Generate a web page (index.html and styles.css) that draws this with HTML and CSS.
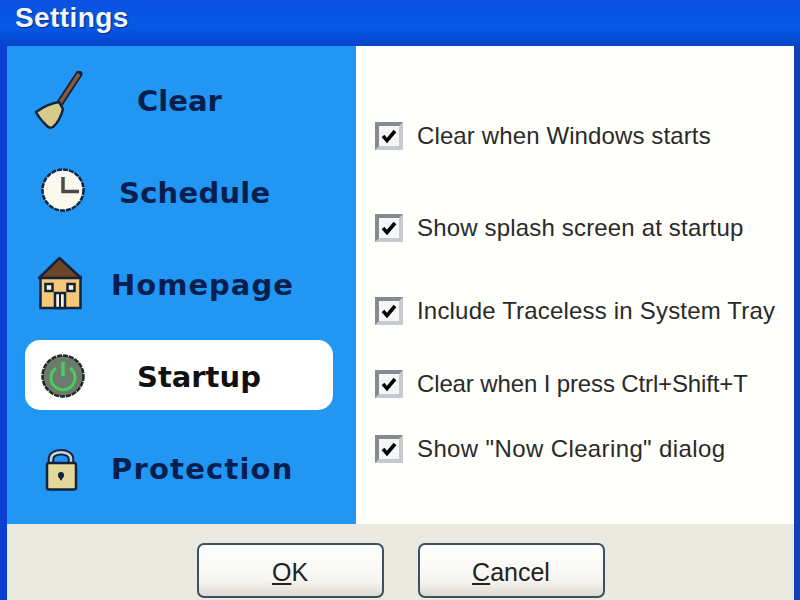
FILE: index.html
```html
<!DOCTYPE html>
<html lang="en">
<head>
    <meta charset="UTF-8">
    <meta name="viewport" content="width=device-width, initial-scale=1.0">
    <title>Settings</title>
    <link rel="stylesheet" href="styles.css">
</head>
<body>
    <div class="window">
        <div class="titlebar">Settings</div>
        <div class="main">
            <div class="sidebar">
                <div class="nav-item nav-clear">
                    <svg class="nav-icon" viewBox="0 0 60 60">
                        <path d="M46 3L27 32" stroke="#10233f" stroke-width="7" stroke-linecap="round"/>
                        <path d="M46 3L27 32" stroke="#8a5a34" stroke-width="3.5"/>
                        <path d="M3 41Q14 33 26 31L30 38Q27 50 20 56Q16 58 13 54Q6 47 3 41Z" fill="#d6cb8c" stroke="#10233f" stroke-width="2.5" stroke-linejoin="round"/>
                    </svg>
                    <span class="nav-label">Clear</span>
                </div>
                <div class="nav-item nav-schedule">
                    <svg class="nav-icon" viewBox="0 0 60 60">
                        <circle cx="30" cy="27" r="20.5" fill="#fbf8ee" stroke="#10233f" stroke-width="2.5" stroke-dasharray="5 1"/>
                        <path d="M30 14V28.5H46" fill="none" stroke="#4a4a48" stroke-width="3.5"/>
                    </svg>
                    <span class="nav-label">Schedule</span>
                </div>
                <div class="nav-item nav-homepage">
                    <svg class="nav-icon" viewBox="0 0 60 60">
                        <rect x="7.5" y="22" width="40" height="31" fill="#f8c87a" stroke="#10233f" stroke-width="2.5"/>
                        <path d="M26.5 3L6 23H48Z" fill="#6e4526" stroke="#10233f" stroke-width="2.5" stroke-linejoin="round"/>
                        <rect x="12.5" y="29" width="7" height="7" fill="#fff3d6" stroke="#10233f" stroke-width="2.5"/>
                        <rect x="34.5" y="29" width="7" height="7" fill="#fff3d6" stroke="#10233f" stroke-width="2.5"/>
                        <rect x="22" y="38" width="10" height="15" fill="#fff3d6" stroke="#10233f" stroke-width="2.5"/>
                        <path d="M27 38V53" stroke="#10233f" stroke-width="2"/>
                    </svg>
                    <span class="nav-label">Homepage</span>
                </div>
                <div class="nav-item nav-startup active">
                    <svg class="nav-icon" viewBox="0 0 60 60">
                        <circle cx="30" cy="29" r="20.5" fill="#6c7a6c" stroke="#1d2a22" stroke-width="2.5" stroke-dasharray="5 1"/>
                        <path d="M23 21A12 12 0 1 0 37 21" fill="none" stroke="#4ccb5e" stroke-width="3"/>
                        <path d="M30 15V29" stroke="#4ccb5e" stroke-width="3.5"/>
                    </svg>
                    <span class="nav-label">Startup</span>
                </div>
                <div class="nav-item nav-protection">
                    <svg class="nav-icon" viewBox="0 0 60 60">
                        <path d="M18 25V20C18 11 38 11 38 20V25" fill="none" stroke="#10233f" stroke-width="6.5"/>
                        <path d="M18 25V20C18 11 38 11 38 20V25" fill="none" stroke="#c9d3d6" stroke-width="2.5"/>
                        <rect x="14" y="24" width="29" height="26.5" rx="2" fill="#e6d79a" stroke="#10233f" stroke-width="2.5"/>
                        <circle cx="28" cy="36" r="3" fill="#10233f"/>
                        <path d="M25 37H31L28 42Z" fill="#10233f"/>
                    </svg>
                    <span class="nav-label">Protection</span>
                </div>
            </div>
            <div class="options">
                <div class="option"><span class="check"><svg viewBox="0 0 16 16"><path d="M2 8L6 12.5L14 3" fill="none" stroke="#000" stroke-width="3.5"/></svg></span>Clear when Windows starts</div>
                <div class="option"><span class="check"><svg viewBox="0 0 16 16"><path d="M2 8L6 12.5L14 3" fill="none" stroke="#000" stroke-width="3.5"/></svg></span>Show splash screen at startup</div>
                <div class="option"><span class="check"><svg viewBox="0 0 16 16"><path d="M2 8L6 12.5L14 3" fill="none" stroke="#000" stroke-width="3.5"/></svg></span>Include Traceless in System Tray</div>
                <div class="option"><span class="check"><svg viewBox="0 0 16 16"><path d="M2 8L6 12.5L14 3" fill="none" stroke="#000" stroke-width="3.5"/></svg></span>Clear when I press Ctrl+Shift+T</div>
                <div class="option"><span class="check"><svg viewBox="0 0 16 16"><path d="M2 8L6 12.5L14 3" fill="none" stroke="#000" stroke-width="3.5"/></svg></span>Show "Now Clearing" dialog</div>
            </div>
        </div>
        <div class="footer">
            <button class="btn"><u>O</u>K</button>
            <button class="btn"><u>C</u>ancel</button>
        </div>
    </div>
</body>
</html>
```

FILE: styles.css
```css
html, body {
    margin: 0;
    height: 100%;
    overflow: hidden;
}
.window {
    display: flex;
    flex-direction: column;
    height: 600px;
    box-sizing: border-box;
    border-left: 7px solid #0a3fd2;
    border-right: 6px solid #1241b6;
    background: #ebeae1;
}
.titlebar {
    height: 46px;
    margin-left: -7px;
    margin-right: -6px;
    padding-left: 15px;
    box-sizing: border-box;
    background: linear-gradient(#0a52e0, #0658e6 60%, #0443c8);
    color: #f4f6ff;
    font-family: "Liberation Sans", sans-serif;
    font-weight: bold;
    font-size: 28px;
    letter-spacing: 0.4px;
    line-height: 36px;
    text-shadow: 1px 1px 1px #0a2a80;
}
.main {
    display: flex;
    height: 478px;
}
.sidebar {
    width: 349px;
    box-sizing: border-box;
    padding: 20px 23px 20px 18px;
    display: flex;
    flex-direction: column;
    gap: 22px;
    background: #2196f3;
}
.nav-item {
    display: flex;
    align-items: center;
    height: 70px;
    box-sizing: border-box;
    padding-left: 8px;
    border-radius: 15px;
    color: #061f4f;
    font-family: "DejaVu Sans", sans-serif;
    font-weight: bold;
    font-size: 29px;
}
.nav-item.active {
    margin-top: -2px;
    margin-bottom: 2px;
    padding-top: 4px;
    background: #fff;
    color: #111;
}
.nav-icon {
    width: 60px;
    height: 60px;
    flex: none;
}
.nav-clear .nav-label { margin-left: 44px; }
.nav-schedule .nav-label { margin-left: 26px; letter-spacing: 0.25px; }
.nav-homepage .nav-label { margin-left: 18px; letter-spacing: 1px; }
.nav-startup .nav-label { margin-left: 44px; }
.nav-protection .nav-label { margin-left: 18px; letter-spacing: 1.2px; }
.options {
    flex: 1;
    padding: 74px 0 0 19px;
    background: #fffffb;
    color: #2a2a2a;
    font-family: "Liberation Sans", sans-serif;
    font-size: 24px;
}
.option {
    display: flex;
    align-items: center;
    gap: 14px;
    height: 32px;
    white-space: nowrap;
    letter-spacing: 0.12px;
}
.option:nth-child(2) { margin-top: 60px; letter-spacing: 0.17px; }
.option:nth-child(3) { margin-top: 51px; letter-spacing: 0.19px; }
.option:nth-child(4) { margin-top: 41px; letter-spacing: -0.13px; }
.option:nth-child(5) { margin-top: 33px; letter-spacing: 0.38px; }
.check {
    display: flex;
    width: 28px;
    height: 28px;
    box-sizing: border-box;
    padding: 2px;
    flex: none;
    border: 4px solid #c5cace;
    border-top-color: #858a8f;
    border-left-color: #858a8f;
    background: #f4f6f8;
}
.check svg {
    width: 100%;
    height: 100%;
}
.footer {
    flex: 1;
    display: flex;
    justify-content: center;
    align-items: flex-start;
    gap: 34px;
    padding-top: 19px;
}
.btn {
    width: 187px;
    height: 55px;
    padding-top: 5px;
    border: 2px solid #3f4e60;
    border-radius: 7px;
    background: linear-gradient(#fff, #f6f5f0 70%, #dcdad0);
    color: #222;
    font-family: "Liberation Sans", sans-serif;
    font-size: 25px;
}
```
